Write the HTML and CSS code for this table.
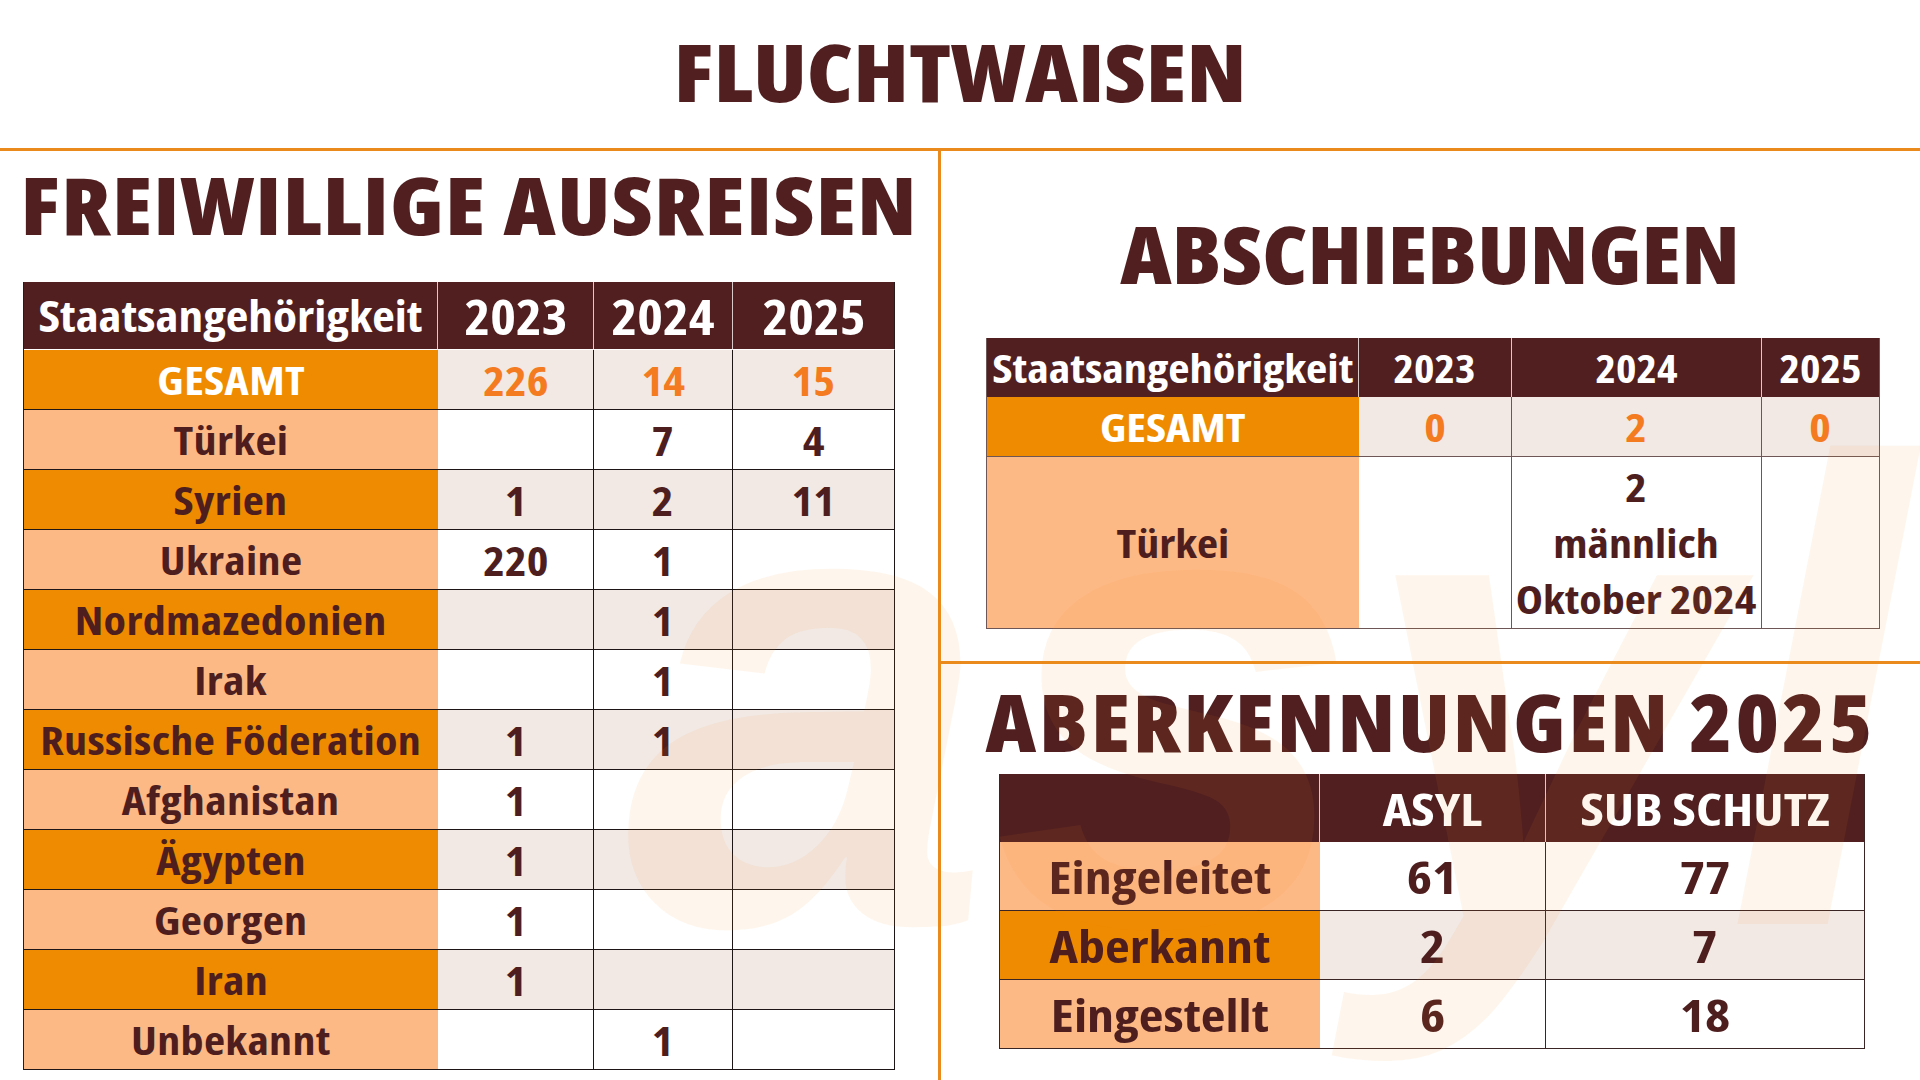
FILE: index.html
```html
<!DOCTYPE html>
<html lang="de">
<head>
<meta charset="utf-8">
<title>Fluchtwaisen</title>
<link rel="stylesheet" href="styles.css">
</head>
<body>
<div class="page">
  <header class="top">
    <h1 class="title"><span class="s">FLUCHTWAISEN</span></h1>
  </header>
  <main class="main">
    <section class="left">
      <h2 class="heading heading-left"><span class="s">FREIWILLIGE AUSREISEN</span></h2>
      <table class="tbl t1">
        <colgroup><col class="c1"><col class="c2"><col class="c3"><col class="c4"></colgroup>
        <thead>
          <tr><th class="lab"><span class="s">Staatsangehörigkeit</span></th><th class="yr"><span class="s">2023</span></th><th class="yr"><span class="s">2024</span></th><th class="yr"><span class="s">2025</span></th></tr>
        </thead>
        <tbody>
          <tr class="dk"><td class="lab total"><span class="s">GESAMT</span></td><td class="num-o"><span class="s">226</span></td><td class="num-o"><span class="s">14</span></td><td class="num-o"><span class="s">15</span></td></tr>
          <tr class="lt"><td class="lab"><span class="s">Türkei</span></td><td></td><td><span class="s">7</span></td><td><span class="s">4</span></td></tr>
          <tr class="dk"><td class="lab"><span class="s">Syrien</span></td><td><span class="s">1</span></td><td><span class="s">2</span></td><td><span class="s">11</span></td></tr>
          <tr class="lt"><td class="lab"><span class="s">Ukraine</span></td><td><span class="s">220</span></td><td><span class="s">1</span></td><td></td></tr>
          <tr class="dk"><td class="lab"><span class="s">Nordmazedonien</span></td><td></td><td><span class="s">1</span></td><td></td></tr>
          <tr class="lt"><td class="lab"><span class="s">Irak</span></td><td></td><td><span class="s">1</span></td><td></td></tr>
          <tr class="dk"><td class="lab"><span class="s">Russische Föderation</span></td><td><span class="s">1</span></td><td><span class="s">1</span></td><td></td></tr>
          <tr class="lt"><td class="lab"><span class="s">Afghanistan</span></td><td><span class="s">1</span></td><td></td><td></td></tr>
          <tr class="dk"><td class="lab"><span class="s">Ägypten</span></td><td><span class="s">1</span></td><td></td><td></td></tr>
          <tr class="lt"><td class="lab"><span class="s">Georgen</span></td><td><span class="s">1</span></td><td></td><td></td></tr>
          <tr class="dk"><td class="lab"><span class="s">Iran</span></td><td><span class="s">1</span></td><td></td><td></td></tr>
          <tr class="lt"><td class="lab"><span class="s">Unbekannt</span></td><td></td><td><span class="s">1</span></td><td></td></tr>
        </tbody>
      </table>
    </section>
    <section class="right">
      <div class="r-top">
        <h2 class="heading heading-abs"><span class="s">ABSCHIEBUNGEN</span></h2>
        <table class="tbl t2">
          <colgroup><col class="d1"><col class="d2"><col class="d3"><col class="d4"></colgroup>
          <thead>
            <tr><th class="hl"><span class="s">Staatsangehörigkeit</span></th><th><span class="s">2023</span></th><th><span class="s">2024</span></th><th><span class="s">2025</span></th></tr>
          </thead>
          <tbody>
            <tr class="dk"><td class="lab total"><span class="s">GESAMT</span></td><td class="num-o"><span class="s">0</span></td><td class="num-o"><span class="s">2</span></td><td class="num-o"><span class="s">0</span></td></tr>
            <tr class="lt tall"><td class="lab"><span class="s">Türkei</span></td><td></td><td class="multi"><span class="s">2<br>männlich<br>Oktober 2024</span></td><td></td></tr>
          </tbody>
        </table>
      </div>
      <div class="r-bot">
        <h2 class="heading heading-ab"><span class="s">ABERKENNUNGEN 2025</span></h2>
        <table class="tbl t3">
          <colgroup><col class="e1"><col class="e2"><col class="e3"></colgroup>
          <thead>
            <tr><th></th><th><span class="s">ASYL</span></th><th><span class="s">SUB SCHUTZ</span></th></tr>
          </thead>
          <tbody>
            <tr class="lt"><td class="lab"><span class="s">Eingeleitet</span></td><td><span class="s">61</span></td><td><span class="s">77</span></td></tr>
            <tr class="dk"><td class="lab"><span class="s">Aberkannt</span></td><td><span class="s">2</span></td><td><span class="s">7</span></td></tr>
            <tr class="lt"><td class="lab"><span class="s">Eingestellt</span></td><td><span class="s">6</span></td><td><span class="s">18</span></td></tr>
          </tbody>
        </table>
      </div>
    </section>
  </main>
  <div class="watermark" aria-hidden="true">asyl</div>
</div>
</body>
</html>
```
FILE: styles.css
```css
html, body {
  margin: 0;
  padding: 0;
  background: #ffffff;
}

.page {
  position: relative;
  width: 1920px;
  height: 1080px;
  overflow: hidden;
  background: #ffffff;
  font-family: "Open Sans", "Noto Sans", sans-serif;
  font-weight: 700;
  font-stretch: condensed;
  color: #4e1e1f;
}

/* condensed face, widened slightly to the reference's proportions */
.s {
  display: inline-block;
  transform: scaleX(1.15);
  transform-origin: 50% 50%;
}

.top {
  height: 148px;
  border-bottom: 3px solid #ea8a1c;
  box-sizing: content-box;
}

.title {
  margin: 0;
  padding-top: 31px;
  font-size: 80px;
  line-height: 80px;
  font-weight: 800;
  text-align: center;
  color: #511f20;
}
.title .s { transform: scaleX(1.145); }

.main {
  display: flex;
  height: 929px;
}

.left {
  width: 938px;
  flex: none;
  border-right: 3px solid #ea8a1c;
}

.right {
  flex: 1;
  display: flex;
  flex-direction: column;
}

.r-top {
  height: 510px;
  flex: none;
  border-bottom: 3px solid #ea8a1c;
}

.r-bot {
  flex: 1;
}

.heading {
  margin: 0;
  font-size: 80px;
  line-height: 80px;
  font-weight: 800;
  color: #511f20;
  text-align: center;
  white-space: nowrap;
}

.heading-left {
  font-size: 79px;
  line-height: 78px;
  margin-top: 15px;
  letter-spacing: 1px;
}
.heading-left .s { transform: scaleX(1.15); }

.heading-abs {
  margin-top: 62px;
}
.heading-abs .s { transform: scaleX(1.118); }

.heading-ab {
  margin-top: 17px;
  letter-spacing: 2.5px;
}
.heading-ab .s { transform: scaleX(1.103); }

/* tables */
.tbl {
  border-collapse: separate;
  border-spacing: 0;
  table-layout: fixed;
  position: relative;
}

.tbl th,
.tbl td {
  padding: 0;
  text-align: center;
  vertical-align: middle;
  white-space: nowrap;
  font-weight: 700;
}

.tbl th {
  background: #521f20;
  color: #ffffff;
}

.tbl .lab {
  color: #4e1e1f;
}

.tbl .total {
  color: #ffffff;
}

.tbl .num-o {
  color: #f47b20;
}

.dk td { background: #f2e9e4; }
.dk td.lab { background: #ef8b00; }
.lt td { background: transparent; }
.lt td.lab { background: #fdb985; }

/* left table */
.t1 {
  margin: 38px 0 0 23px;
  width: 871px;
  border-left: 1px solid #2a1a1a;
}

.t1 .c1 { width: 414px; }
.t1 .c2 { width: 156px; }
.t1 .c3 { width: 139px; }
.t1 .c4 { width: 162px; }

.t1 thead tr { height: 68px; }
.t1 tbody tr { height: 60px; }

.t1 th {
  border-right: 1px solid #d9c9c9;
  border-bottom: 1px solid #ffffff;
}
.t1 th:last-child { border-right: 1px solid #2a1a1a; }
.t1 th.lab { color: #ffffff; font-size: 42px; }
.t1 th.lab .s { transform: scaleX(1.175); }
.t1 th.yr { font-size: 49px; }
.t1 th.yr .s { transform: scaleX(1.12); }

.t1 td {
  font-size: 41px;
  border-bottom: 1px solid #1e1616;
  border-right: 1px solid #1e1616;
}
.t1 td .s { transform: scaleX(1.13); }
.t1 td.lab {
  border-right: none;
  font-size: 40px;
  letter-spacing: 0.3px;
}
.t1 td.lab .s { transform: scaleX(1.15); }
.t1 td.total { color: #ffffff; }

/* abschiebungen table */
.t2 {
  margin: 45px 0 0 45px;
  width: 893px;
  border-left: 1px solid #6e5656;
}

.t2 .d1 { width: 372px; }
.t2 .d2 { width: 153px; }
.t2 .d3 { width: 250px; }
.t2 .d4 { width: 118px; }

.t2 thead tr { height: 59px; }
.t2 tbody tr { height: 60px; }
.t2 tbody tr.tall { height: 172px; }

.t2 th {
  font-size: 39px;
  border-right: 1px solid #d9c9c9;
}
.t2 th .s { transform: scaleX(1.12); }
.t2 th.hl .s { transform: scaleX(1.19); }
.t2 th:last-child { border-right: 1px solid #6e5656; }

.t2 td {
  font-size: 39px;
  border-bottom: 1px solid #6e5656;
  border-right: 1px solid #6e5656;
}
.t2 td .s { transform: scaleX(1.18); }
.t2 td.lab { border-right: none; }
.t2 td.total { color: #ffffff; }

.t2 .multi {
  line-height: 56px;
}

/* aberkennungen table */
.t3 {
  margin: 13px 0 0 58px;
  width: 865px;
  border-left: 1px solid #3a2424;
}

.t3 .e1 { width: 320px; }
.t3 .e2 { width: 226px; }
.t3 .e3 { width: 319px; }

.t3 thead tr { height: 68px; }
.t3 tbody tr { height: 69px; }

.t3 th {
  font-size: 45px;
  border-right: 1px solid #d9c9c9;
}
.t3 th:last-child { border-right: 1px solid #3a2424; }

.t3 td {
  font-size: 45px;
  border-bottom: 1px solid #3a2424;
  border-right: 1px solid #3a2424;
}
.t3 td.lab { border-right: none; }
.t3 .s { transform: scaleX(1.2); }

/* faint background logo */
.watermark {
  position: absolute;
  left: 625px;
  top: 366px;
  font-family: "Liberation Sans", Arial, sans-serif;
  font-style: italic;
  font-weight: 700;
  font-stretch: normal;
  font-size: 660px;
  line-height: 660px;
  color: rgba(238, 138, 31, 0.08);
  pointer-events: none;
  white-space: nowrap;
}
```
